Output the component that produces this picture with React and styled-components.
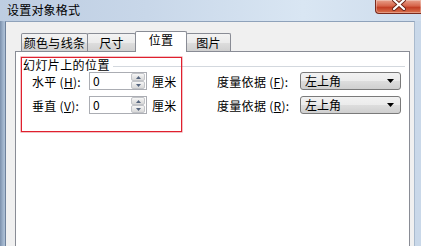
import React from 'react';
import styled, { createGlobalStyle } from 'styled-components';

const Global = createGlobalStyle`
  html, body { margin: 0; padding: 0; background: #fff; overflow: hidden; }
  body { font-family: "Noto Sans CJK SC", "Noto Sans", sans-serif; color: #000; }
`;

const Window = styled.div`
  width: 421px;
  height: 246px;
  display: flex;
  flex-direction: column;
  overflow: hidden;
  background: linear-gradient(to right, #7b90ac 0px, #9fb3cb 3px, #b5c7dc 6px, #c4d4e7 60%, #c9d8e9 100%);
`;

const TitleBar = styled.div`
  flex: none;
  height: 21px;
  display: flex;
  justify-content: space-between;
  align-items: flex-start;
  background: linear-gradient(to right, #bdcde1 0%, #c8d7e9 35%, #d9e6f3 72%, #cedcec 100%);
`;

const Title = styled.div`
  padding: 3px 0 0 7px;
  font-size: 12px;
  line-height: 13px;
  letter-spacing: 0.2px;
`;

const Close = styled.div`
  width: 46px;
  height: 14px;
  box-sizing: border-box;
  border: 1px solid #7a2a1d;
  border-top: none;
  border-right: none;
  border-radius: 0 0 0 4px;
  background: linear-gradient(#e8a08b, #d6654b 45%, #c33f25 58%, #d9734f);
  box-shadow: inset 0 0 0 1px rgba(255, 255, 255, 0.3);
  display: flex;
  justify-content: center;
  align-items: flex-start;
`;

const Body = styled.div`
  flex: 1;
  min-height: 0;
  margin: 0 6px 0 5px;
  background: #f0f0f0;
  border-left: 1px solid #6e819b;
  border-top: 1px solid #8fa2ba;
  border-right: 1px solid #a9bacd;
  padding: 9px 4px 0 9px;
  display: flex;
  flex-direction: column;
`;

const Tabs = styled.div`
  flex: none;
  height: 20px;
  display: flex;
  align-items: flex-end;
  padding-left: 6px;
  position: relative;
  z-index: 1;
`;

const Tab = styled.div`
  box-sizing: border-box;
  width: ${p => p.$w}px;
  margin-left: ${p => p.$ml || 0}px;
  height: ${p => (p.$active ? 21 : 18)}px;
  margin-bottom: ${p => (p.$active ? -1 : 0)}px;
  border: 1px solid #898c95;
  border-bottom: none;
  border-radius: 2px 2px 0 0;
  background: ${p =>
    p.$active ? '#fff' : 'linear-gradient(#f3f3f3, #ebebeb 50%, #dedede 51%, #d0d0d0)'};
  position: relative;
  z-index: ${p => (p.$active ? 2 : 1)};
  font-size: 12px;
  letter-spacing: 0.3px;
  text-align: center;
  line-height: ${p => (p.$active ? 16 : 17)}px;
  white-space: nowrap;
`;

const Panel = styled.div`
  flex: 1;
  background: #fff;
  border: 1px solid #898c95;
  border-bottom: none;
  position: relative;
  padding: 6px 4px 0 7px;
`;

const GroupHeader = styled.div`
  display: flex;
  align-items: center;
  height: 13px;
  font-size: 12px;
  line-height: 13px;
  letter-spacing: 0.4px;
`;

const GroupLine = styled.div`
  flex: 1;
  height: 1px;
  margin: 3px 0 0 3px;
  background: #d3d8de;
`;

const Form = styled.div`
  display: grid;
  grid-template-columns: 57px 58px 70px 83px 101px;
  grid-auto-rows: 18px;
  row-gap: 6px;
  margin-top: 1px;
  padding-left: 9px;
  align-items: center;
  font-size: 12px;
`;

const Label = styled.div`
  line-height: 18px;
  padding-top: 1px;
  white-space: nowrap;
  letter-spacing: 0.3px;
`;

const Key = styled.span`
  text-decoration: underline;
`;

const Unit = styled(Label)`
  padding-left: 5px;
`;

const Spin = styled.div`
  box-sizing: border-box;
  height: 18px;
  border: 1px solid #abadb3;
  background: #fff;
  display: flex;
`;

const SpinValue = styled.div`
  flex: 1;
  padding-left: 3px;
  font-size: 12px;
  line-height: 16px;
`;

const SpinButtons = styled.div`
  width: 14px;
  margin: 0 1px 0 0;
  display: flex;
  flex-direction: column;
`;

const SpinBtn = styled.div`
  flex: 1;
  box-sizing: border-box;
  border: 1px solid #c2c4c8;
  border-radius: 2px;
  background: linear-gradient(#f7f7f7, #e6e6e6 50%, #d9d9d9);
  display: flex;
  align-items: center;
  justify-content: center;
`;

const Select = styled.div`
  box-sizing: border-box;
  height: 18px;
  border: 1px solid #7a7a7a;
  border-radius: 3px;
  background: linear-gradient(#f2f2f2, #ebebeb 50%, #dddddd 51%, #cfcfcf);
  display: flex;
  align-items: center;
  justify-content: space-between;
  padding: 0 4px 0 4px;
  font-size: 12px;
  line-height: 16px;
`;

const Highlight = styled.div`
  position: absolute;
  left: 5px;
  top: 5px;
  width: 161px;
  height: 75px;
  box-sizing: border-box;
  border: 1px solid #e0202e;
  box-shadow: 0 0 0 0.6px rgba(220, 70, 80, 0.55);
  pointer-events: none;
`;

const Tri = ({ up }) => (
  <svg width="5" height="3" viewBox="0 0 5 3">
    <path d={up ? 'M0 3h5L2.5 0z' : 'M0 0h5L2.5 3z'} fill="#55657e" />
  </svg>
);

const SpinBox = ({ value }) => (
  <Spin>
    <SpinValue>{value}</SpinValue>
    <SpinButtons>
      <SpinBtn><Tri up /></SpinBtn>
      <SpinBtn><Tri /></SpinBtn>
    </SpinButtons>
  </Spin>
);

const Dropdown = ({ value }) => (
  <Select>
    <span>{value}</span>
    <svg width="7" height="4" viewBox="0 0 7 4" style={{ marginRight: 2 }}>
      <path d="M0 0h7L3.5 4z" fill="#000" />
    </svg>
  </Select>
);

export default function App() {
  return (
    <>
      <Global />
      <Window>
        <TitleBar>
          <Title>设置对象格式</Title>
          <Close>
            <svg width="14" height="11" viewBox="0 0 14 11">
              <path d="M2 0L12 9M12 0L2 9" stroke="#6b2418" strokeWidth="4" strokeLinecap="round" />
              <path d="M2 0L12 9M12 0L2 9" stroke="#fff" strokeWidth="2.2" strokeLinecap="round" />
            </svg>
          </Close>
        </TitleBar>
        <Body>
          <Tabs>
            <Tab $w={67}>颜色与线条</Tab>
            <Tab $w={49} $ml={-1}>尺寸</Tab>
            <Tab $w={52} $ml={-1} $active>位置</Tab>
            <Tab $w={45} $ml={-1}>图片</Tab>
          </Tabs>
          <Panel>
            <GroupHeader>
              <span>幻灯片上的位置</span>
              <GroupLine />
            </GroupHeader>
            <Form>
              <Label>水平 (<Key>H</Key>):</Label>
              <SpinBox value="0" />
              <Unit>厘米</Unit>
              <Label>度量依据 (<Key>F</Key>):</Label>
              <Dropdown value="左上角" />
              <Label>垂直 (<Key>V</Key>):</Label>
              <SpinBox value="0" />
              <Unit>厘米</Unit>
              <Label>度量依据 (<Key>R</Key>):</Label>
              <Dropdown value="左上角" />
            </Form>
            <Highlight />
          </Panel>
        </Body>
      </Window>
    </>
  );
}
